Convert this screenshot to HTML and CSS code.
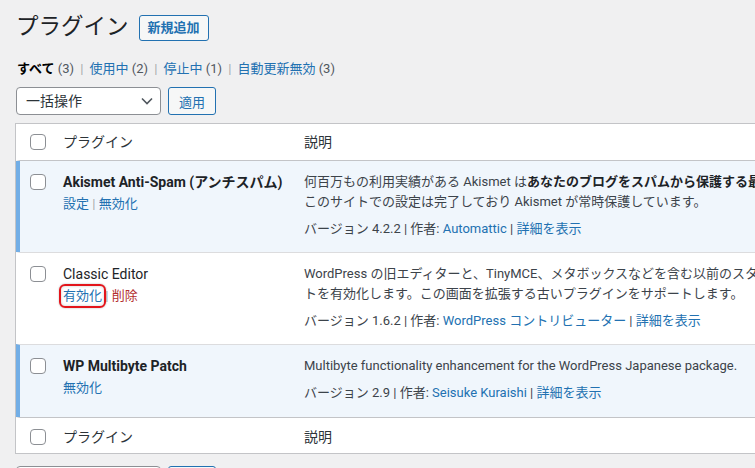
FILE: index.html
```html
<!DOCTYPE html>
<html lang="ja">
<head>
    <meta charset="UTF-8">
    <title>プラグイン</title>
    <meta name="viewport" content="width=device-width, initial-scale=1.0">
    <link rel="stylesheet" href="styles.css">
</head>
<body>

<div class="wrap">
    <div class="page-header">
        <h1>プラグイン</h1>
        <a href="#" class="page-title-action">新規追加</a>
    </div>

    <ul class="subsubsub">
        <li><a href="#" class="current">すべて <span class="count">(3)</span></a> |</li>
        <li><a href="#">使用中 <span class="count">(2)</span></a> |</li>
        <li><a href="#">停止中 <span class="count">(1)</span></a> |</li>
        <li><a href="#">自動更新無効 <span class="count">(3)</span></a></li>
    </ul>

    <div class="tablenav">
        <label class="select-wrap">
            <select>
                <option>一括操作</option>
                <option>有効化</option>
                <option>無効化</option>
            </select>
            <svg class="chevron" width="12" height="8" viewBox="0 0 12 8"><path d="M1 1.5l5 5 5-5" fill="none" stroke="#50575e" stroke-width="1.6"/></svg>
        </label>
        <button class="button">適用</button>
    </div>

    <table class="plugins">
        <colgroup>
            <col class="col-check">
            <col class="col-name">
            <col>
        </colgroup>
        <thead>
            <tr>
                <th class="check-column"><input type="checkbox"></th>
                <th>プラグイン</th>
                <th>説明</th>
            </tr>
        </thead>
        <tbody>
            <tr class="active">
                <th class="check-column"><input type="checkbox"></th>
                <td class="plugin-title">
                    <strong>Akismet Anti-Spam (アンチスパム)</strong>
                    <div class="row-actions">
                        <a href="#">設定</a> | <a href="#">無効化</a>
                    </div>
                </td>
                <td class="desc">
                    <p>何百万もの利用実績がある Akismet は<strong>あなたのブログをスパムから保護する最良の方法</strong>と言えるでしょう。<br>このサイトでの設定は完了しており Akismet が常時保護しています。</p>
                    <div class="plugin-version">バージョン 4.2.2 | 作者: <a href="#">Automattic</a> | <a href="#">詳細を表示</a></div>
                </td>
            </tr>
            <tr class="inactive">
                <th class="check-column"><input type="checkbox"></th>
                <td class="plugin-title">
                    <span class="name">Classic Editor</span>
                    <div class="row-actions">
                        <a href="#" class="marked">有効化</a> | <a href="#" class="delete">削除</a>
                    </div>
                </td>
                <td class="desc">
                    <p>WordPress の旧エディターと、TinyMCE、メタボックスなどを含む以前のスタイルの投稿編集画面レイアウ<br>トを有効化します。この画面を拡張する古いプラグインをサポートします。</p>
                    <div class="plugin-version">バージョン 1.6.2 | 作者: <a href="#">WordPress コントリビューター</a> | <a href="#">詳細を表示</a></div>
                </td>
            </tr>
            <tr class="active">
                <th class="check-column"><input type="checkbox"></th>
                <td class="plugin-title">
                    <strong>WP Multibyte Patch</strong>
                    <div class="row-actions">
                        <a href="#">無効化</a>
                    </div>
                </td>
                <td class="desc">
                    <p>Multibyte functionality enhancement for the WordPress Japanese package.</p>
                    <div class="plugin-version">バージョン 2.9 | 作者: <a href="#">Seisuke Kuraishi</a> | <a href="#">詳細を表示</a></div>
                </td>
            </tr>
        </tbody>
        <tfoot>
            <tr>
                <th class="check-column"><input type="checkbox"></th>
                <th>プラグイン</th>
                <th>説明</th>
            </tr>
        </tfoot>
    </table>

    <div class="tablenav bottom">
        <label class="select-wrap">
            <select>
                <option>一括操作</option>
            </select>
            <svg class="chevron" width="12" height="8" viewBox="0 0 12 8"><path d="M1 1.5l5 5 5-5" fill="none" stroke="#50575e" stroke-width="1.6"/></svg>
        </label>
        <button class="button">適用</button>
    </div>
</div>

</body>
</html>
```

FILE: styles.css
```css
:root {
    --link: #2271b1;
    --text: #3c434a;
    --heading: #1d2327;
    --border: #c3c4c7;
    --fundo: #f0f0f1;
    --ativo: #f0f6fc;
    --faixa: #72aee6;
}

body {
    margin: 0;
    background-color: var(--fundo);
    color: var(--text);
    font-family: Roboto, "Noto Sans CJK JP", sans-serif;
    font-size: 13px;
    line-height: 20px;
    overflow: hidden;
}

a {
    color: var(--link);
    text-decoration: none;
}

.wrap {
    padding: 11px 0 0 16px;
}

.page-header {
    display: flex;
    align-items: flex-start;
    gap: 10px;
}

h1 {
    margin: 0;
    font-size: 22.5px;
    font-weight: 400;
    line-height: 30px;
    color: var(--heading);
}

.page-title-action {
    margin-top: 4px;
    height: 26px;
    box-sizing: border-box;
    padding: 0 8px;
    border: 1px solid var(--link);
    border-radius: 3px;
    background-color: #f6f7f7;
    font-size: 13px;
    font-weight: 700;
    line-height: 24px;
}

.subsubsub {
    list-style: none;
    margin: 18px 0 0 1px;
    padding: 0;
    display: flex;
    gap: 6px;
    color: #a7aaad;
}

.subsubsub a {
    margin-right: 3px;
}

.subsubsub .current {
    color: #000;
    font-weight: 700;
}

.subsubsub .count {
    color: #50575e;
    font-weight: 400;
}

.tablenav {
    display: flex;
    gap: 7px;
    margin-top: 8px;
}

.tablenav.bottom {
    margin-top: 12px;
}

.select-wrap {
    position: relative;
    display: block;
}

.select-wrap select {
    appearance: none;
    width: 145px;
    height: 28px;
    padding: 0 24px 0 9px;
    border: 1px solid #8c8f94;
    border-radius: 4px;
    background-color: #fff;
    color: #2c3338;
    font-family: inherit;
    font-size: 14px;
}

.select-wrap .chevron {
    position: absolute;
    right: 8px;
    top: 10px;
    pointer-events: none;
}

.button {
    height: 28px;
    padding: 0 10px;
    border: 1px solid var(--link);
    border-radius: 3px;
    background-color: #f6f7f7;
    color: var(--link);
    font-family: inherit;
    font-size: 13px;
    cursor: pointer;
}

.plugins {
    width: 1100px;
    margin: 8px 0 0 -1px;
    table-layout: fixed;
    border-collapse: separate;
    border-spacing: 0;
    border: 1px solid var(--border);
    background-color: #fff;
}

.col-check {
    width: 37px;
}

.col-name {
    width: 241px;
}

.plugins th,
.plugins td {
    text-align: left;
    vertical-align: top;
    font-weight: 400;
}

.plugins thead th,
.plugins tfoot th {
    padding: 8px 10px;
    font-size: 14px;
    color: #2c3338;
}

.plugins thead th {
    border-bottom: 1px solid var(--border);
}

.plugins tfoot th {
    padding: 9px 10px 6px;
    border-top: 1px solid var(--border);
}

.plugins .check-column {
    padding-left: 10px;
    padding-right: 0;
    border-left: 4px solid transparent;
}

.plugins input[type="checkbox"] {
    appearance: none;
    display: block;
    width: 16px;
    height: 16px;
    margin: 2px 0 0;
    border: 1px solid #8c8f94;
    border-radius: 4px;
    background-color: #fff;
}

.plugins tbody th,
.plugins tbody td {
    padding: 11px 10px 13px;
}

.plugins tbody tr + tr th,
.plugins tbody tr + tr td {
    padding-top: 11px;
    border-top: 1px solid #dcdcde;
}

.plugins tbody tr:last-child th,
.plugins tbody tr:last-child td {
    padding-bottom: 14px;
}

.plugins .active th,
.plugins .active td {
    background-color: var(--ativo);
}

.plugins .active .check-column {
    border-left-color: var(--faixa);
}

.plugin-title {
    font-size: 14px;
    color: var(--heading);
}

.plugin-title strong {
    font-weight: 700;
    white-space: nowrap;
}

.row-actions {
    padding-top: 2px;
    font-size: 13px;
    color: #a7aaad;
}

.row-actions .delete {
    color: #b32d2e;
}

.row-actions .marked {
    position: relative;
}

.row-actions .marked::after {
    content: "";
    position: absolute;
    top: -4px;
    left: -4px;
    right: -4px;
    bottom: -5px;
    border: 2px solid #e3151b;
    border-radius: 6px;
    box-shadow: 0 0 2px rgba(0, 0, 0, 0.3), inset 0 0 3px rgba(0, 0, 0, 0.2);
}

.desc p {
    margin: 0;
    white-space: nowrap;
}

.desc strong {
    font-weight: 700;
    color: var(--heading);
}

.plugin-version {
    margin-top: 7px;
    white-space: nowrap;
}
```
